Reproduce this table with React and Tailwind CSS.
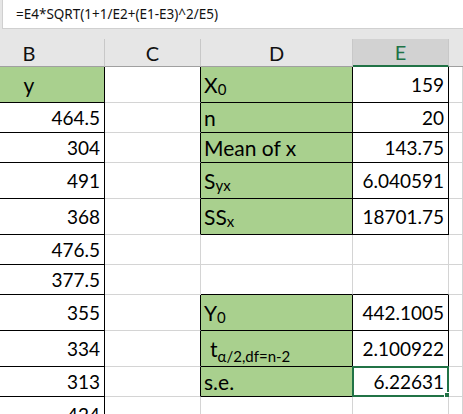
import React from "react";

const BLACK = "#000000";
const GRAY = "#d4d4d4";
const GREEN = "#a9d08e";

const widths = { B: 105, C: 96, D: 152, E: 96 };

function Cell({ w, r, b, bg, align = "right", children, extra = "", style = {} }) {
  const justify =
    align === "right" ? "justify-end pr-[4px]" : align === "center" ? "justify-center" : "justify-start pl-[3px]";
  return (
    <div
      className={`relative flex items-center shrink-0 h-full ${justify} ${extra}`}
      style={{
        width: w,
        flexGrow: w ? 0 : 1,
        borderRight: `1px solid ${r}`,
        borderBottom: `1px solid ${b}`,
        background: bg || "#ffffff",
        ...style,
      }}
    >
      {children}
    </div>
  );
}

const Sub = ({ children }) => (
  <span className="text-[15px] relative top-[5px] leading-none">{children}</span>
);

const rows = [
  { h: 36, b: "y", d: <>X<Sub>0</Sub></>, e: "159", block: true, bottom: true },
  { h: 30, b: "464.5", d: "n", e: "20", block: true, bottom: true },
  { h: 30, b: "304", d: "Mean of x", e: "143.75", block: true, bottom: true },
  { h: 36, b: "491", d: <>S<Sub>yx</Sub></>, e: "6.040591", block: true, bottom: true },
  { h: 36, b: "368", d: <>SS<Sub>x</Sub></>, e: "18701.75", block: true, bottom: true },
  { h: 30, b: "476.5", block: false, bottom: false },
  { h: 30, b: "377.5", block: false, bottom: true },
  { h: 36, b: "355", d: <>Y<Sub>0</Sub></>, e: "442.1005", block: true, bottom: true },
  { h: 36, b: "334", d: <span className="pl-[6px]">t<Sub>α/2,df=n-2</Sub></span>, e: "2.100922", block: true, bottom: true },
  { h: 30, b: "313", d: "s.e.", e: "6.22631", block: true, bottom: true, selected: true },
  { h: 36, b: "424", block: false, bottom: false },
];

export default function App() {
  return (
    <div
      className="w-[463px] h-[414px] overflow-hidden bg-white text-black"
      style={{ fontFamily: "Lato, 'Noto Sans', sans-serif" }}
    >
      {/* formula bar */}
      <div className="h-[39px] bg-[#e6e6e6] flex flex-col">
        <div
          className="ml-[2px] h-[29px] bg-white border-b border-l border-[#d0d0d0] flex items-center pl-[13px] text-[13.5px] text-[#111]"
          style={{ fontFamily: "'Noto Sans', 'Open Sans', sans-serif" }}
        >
          =E4*SQRT(1+1/E2+(E1-E3)^2/E5)
        </div>
      </div>
      {/* column headers */}
      <div className="h-[28px] flex bg-[#e6e6e6] text-[20px] text-[#111]">
        <div className="w-[105px] shrink-0 flex items-center justify-center pr-[46px] border-r border-[#c8c8c8] border-b border-b-[#a0a0a0]">B</div>
        <div className="w-[96px] shrink-0 flex items-center justify-center border-r border-[#c8c8c8] border-b border-b-[#a0a0a0]">C</div>
        <div className="w-[152px] shrink-0 flex items-center justify-center border-r border-[#c8c8c8] border-b border-b-[#a0a0a0]">D</div>
        <div className="w-[96px] shrink-0 flex items-center justify-center bg-[#d2d2d2] text-[#217346] border-r border-[#c8c8c8] border-b-2 border-b-[#217346] pb-[1px]">E</div>
        <div className="grow border-b border-b-[#a0a0a0]"></div>
      </div>
      {/* rows */}
      <div className="text-[19px] leading-none">
        {rows.map((row, i) => (
          <div key={i} className="flex" style={{ height: row.h }}>
            <Cell w={widths.B} r={BLACK} b={BLACK} bg={i === 0 ? GREEN : "#fff"} align={i === 0 ? "center" : "right"} extra={i === 0 ? "!pr-[46px] text-[21px]" : ""}>
              {row.b}
            </Cell>
            <Cell w={widths.C} r={row.block ? BLACK : GRAY} b={GRAY} />
            <Cell w={widths.D} r={row.block ? BLACK : GRAY} b={row.bottom ? BLACK : GRAY} bg={row.block ? GREEN : "#fff"} align="left" extra="text-[21px]">
              {row.d}
            </Cell>
            <Cell w={widths.E} r={row.block ? BLACK : GRAY} b={row.bottom ? BLACK : GRAY} align="right">
              {row.e}
              {row.selected && (
                <>
                  <div className="absolute left-[-1px] top-[-1px] right-[-1px] bottom-[-1px] border-2 border-[#217346] pointer-events-none"></div>
                  <div className="absolute right-[-4px] bottom-[-4px] w-[6px] h-[6px] bg-[#217346] border border-white box-content"></div>
                </>
              )}
            </Cell>
            <Cell r={GRAY} b={GRAY} />
          </div>
        ))}
      </div>
    </div>
  );
}
